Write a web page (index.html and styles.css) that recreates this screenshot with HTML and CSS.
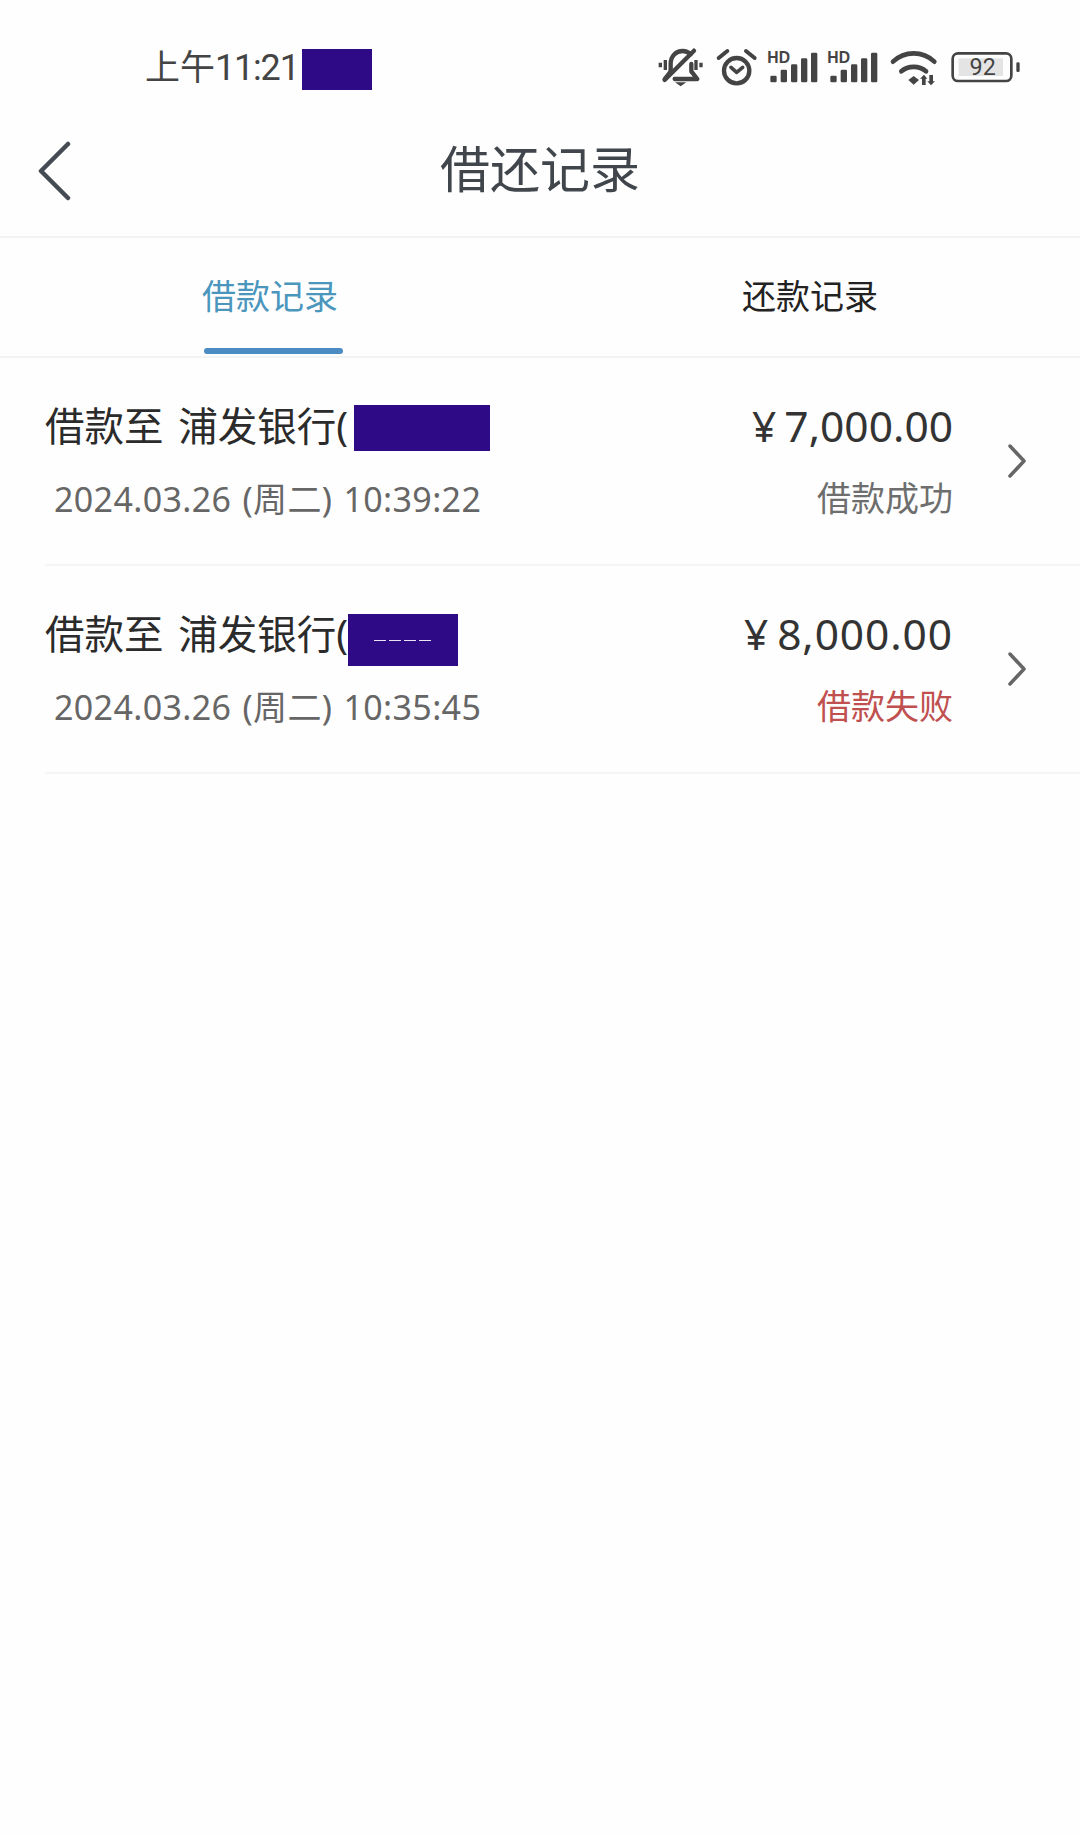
FILE: index.html
```html
<!DOCTYPE html>
<html lang="zh-CN">
<head>
  <meta charset="UTF-8">
  <meta name="viewport" content="width=device-width, initial-scale=1.0">
  <title>借还记录</title>
  <link rel="stylesheet" href="styles.css">
</head>
<body>
  <div class="status-bar">
    <span class="status-time">上午<span class="status-clock">11:21</span></span>
    <span class="mask mask-time"></span>
    <div class="status-icons">
      <svg class="icon-bell" viewBox="40 0 170 210">
        <g fill="none" stroke="#444" stroke-width="13" stroke-linecap="round" stroke-linejoin="round">
          <path d="M90 125 V102 C90 78 106 63 126 63 C136 63 144 67 150 73"/>
          <path d="M152 102 V124 L170 147 H102"/>
          <path d="M90 125 L72 147"/>
          <path d="M160 62 L72 150"/>
          <path d="M59 98 V112 M74 90 V120 M166 90 V120 M181 98 V112" stroke-width="10" stroke-linecap="butt"/>
        </g>
        <path d="M103 157 H137 L120 169 Z" fill="#444"/>
      </svg>
      <svg class="icon-alarm" viewBox="210 0 155 210">
        <g fill="none" stroke="#444" stroke-linecap="round" stroke-linejoin="round">
          <circle cx="290" cy="122" r="38" stroke-width="13"/>
          <path d="M236 84 L262 63 M318 63 L344 84" stroke-width="12"/>
          <path d="M273 112 L290 127 L308 112" stroke-width="11"/>
        </g>
      </svg>
      <svg class="icon-signal" viewBox="365 0 180 210">
        <text x="381" y="98" class="signal-hd">HD</text>
        <rect x="390" y="137" width="19" height="20" rx="4" fill="#444"/>
        <rect x="421" y="119" width="19" height="38" rx="4" fill="#444"/>
        <rect x="452" y="103" width="19" height="54" rx="4" fill="#444"/>
        <rect x="482" y="85" width="19" height="72" rx="4" fill="#444"/>
        <rect x="512" y="68" width="19" height="89" rx="4" fill="#444"/>
      </svg>
      <svg class="icon-signal" viewBox="365 0 185 210">
        <text x="381" y="98" class="signal-hd">HD</text>
        <rect x="390" y="137" width="19" height="20" rx="4" fill="#444"/>
        <rect x="421" y="119" width="19" height="38" rx="4" fill="#444"/>
        <rect x="452" y="103" width="19" height="54" rx="4" fill="#444"/>
        <rect x="482" y="85" width="19" height="72" rx="4" fill="#444"/>
        <rect x="512" y="68" width="19" height="89" rx="4" fill="#444"/>
      </svg>
      <svg class="icon-wifi" viewBox="730 0 190 210">
        <g fill="none" stroke="#444" stroke-linecap="round">
          <path d="M757 95 C792 62 846 62 881 95" stroke-width="14"/>
          <path d="M782 124 C802 106 836 106 856 124" stroke-width="14"/>
        </g>
        <path d="M803 150 L819 138 L835 150 L819 164 Z" fill="#444"/>
        <path d="M844 165 V146 H838 L850 134 L860 146 H855 V165 Z M866 135 V154 H860 L871 166 L883 154 H877 V135 Z" fill="#444"/>
      </svg>
      <svg class="icon-battery" viewBox="920 0 240 210">
        <rect x="937" y="70" width="176" height="83" rx="16" fill="none" stroke="#444" stroke-width="8"/>
        <rect x="955" y="85" width="133" height="53" fill="#e4e4e4"/>
        <text x="1027" y="136" class="battery-num" text-anchor="middle">92</text>
        <rect x="1128" y="97" width="10" height="29" rx="4" fill="#444"/>
      </svg>
    </div>
  </div>

  <div class="nav-bar">
    <svg class="back-icon" viewBox="0 0 34 60">
      <path d="M30 3 L3 30 L30 57" fill="none" stroke="#444b52" stroke-width="4.5" stroke-linecap="round" stroke-linejoin="round"/>
    </svg>
    <h1 class="nav-title">借还记录</h1>
  </div>

  <div class="tabs">
    <div class="tab tab-active">
      <span>借款记录</span>
      <i class="tab-line"></i>
    </div>
    <div class="tab">
      <span>还款记录</span>
    </div>
  </div>

  <div class="record-list">
    <div class="record">
      <div class="record-info">
        <div class="record-title">借款至 浦发银行(<span class="mask mask-bank-a"></span></div>
        <div class="record-date">2024.03.26 (周二) 10:39:22</div>
      </div>
      <div class="record-money">
        <div class="record-amount">¥<span>7,000.00</span></div>
        <div class="record-state">借款成功</div>
      </div>
      <svg class="arrow-icon" viewBox="0 0 18 34">
        <path d="M2 2 L16 17 L2 32" fill="none" stroke="#666" stroke-width="3.5" stroke-linecap="round" stroke-linejoin="round"/>
      </svg>
    </div>
    <div class="record">
      <div class="record-info">
        <div class="record-title">借款至 浦发银行(<span class="mask mask-bank-b"><i class="mask-dash"></i></span></div>
        <div class="record-date">2024.03.26 (周二) 10:35:45</div>
      </div>
      <div class="record-money">
        <div class="record-amount amount-wide">¥<span>8,000.00</span></div>
        <div class="record-state state-fail">借款失败</div>
      </div>
      <svg class="arrow-icon" viewBox="0 0 18 34">
        <path d="M2 2 L16 17 L2 32" fill="none" stroke="#666" stroke-width="3.5" stroke-linecap="round" stroke-linejoin="round"/>
      </svg>
    </div>
  </div>
</body>
</html>
```

FILE: styles.css
```css
* {
  box-sizing: border-box;
}

body {
  margin: 0;
  padding: 0;
  width: 1080px;
  height: 1836px;
  overflow: hidden;
  background-color: #fefefe;
  font-family: "Noto Sans", "Noto Sans CJK SC", sans-serif;
  color: #333;
}

.mask {
  display: inline-block;
  background-color: #2e0a86;
}

/* status bar */
.status-bar {
  display: flex;
  align-items: flex-start;
  height: 100px;
  padding-left: 145px;
}

.status-time {
  margin-top: 45px;
  font-size: 35px;
  line-height: 46px;
  color: #444;
  font-family: Roboto, "Noto Sans CJK SC", sans-serif;
}

.status-clock {
  font-size: 36px;
  letter-spacing: -1.2px;
}

.mask-time {
  width: 70px;
  height: 41px;
  margin-top: 49px;
  margin-left: 3px;
}

.status-icons {
  display: flex;
  margin-left: auto;
  margin-top: 30px;
  padding-right: 53px;
}

.status-icons svg {
  display: block;
  height: 70px;
}

.icon-bell { width: 56.67px; }
.icon-alarm { width: 51.67px; }
.icon-signal { width: 60px; }
.icon-signal + .icon-signal { width: 61.67px; }
.icon-wifi { width: 63.33px; }
.icon-battery { width: 80px; }

.signal-hd {
  font-family: "Liberation Sans", sans-serif;
  font-weight: bold;
  font-size: 47px;
  fill: #444;
}

.battery-num {
  font-family: Roboto, sans-serif;
  font-size: 70px;
  fill: #444;
}

/* title */
.nav-bar {
  display: flex;
  align-items: center;
  justify-content: center;
  position: relative;
  height: 138px;
  padding-top: 2px;
  border-bottom: 2px solid #f3f3f3;
}

.back-icon {
  position: absolute;
  left: 38px;
  top: 41px;
  width: 34px;
  height: 60px;
}

.nav-title {
  margin: 0;
  font-size: 50px;
  font-weight: 400;
  color: #40464c;
  line-height: 70px;
}

/* tabs */
.tabs {
  display: flex;
  height: 120px;
  border-bottom: 2px solid #f3f3f3;
}

.tab {
  flex: 1;
  display: flex;
  flex-direction: column;
  align-items: center;
  padding-top: 35px;
  font-size: 34px;
  line-height: 46px;
  color: #222;
}

.tab-active {
  color: #4a96bd;
}

.tab-line {
  display: block;
  width: 139px;
  height: 6px;
  margin-top: 29px;
  margin-left: 7px;
  border-radius: 3px;
  background-color: #4b8dc3;
}

/* records */
.record {
  display: flex;
  align-items: flex-start;
  height: 208px;
  margin-left: 45px;
  border-bottom: 2px solid #f5f5f5;
}

.record-info {
  flex: 1;
}

.record-title {
  display: flex;
  align-items: flex-start;
  height: 56px;
  margin-top: 40px;
  font-size: 39.5px;
  line-height: 56px;
  word-spacing: 4.5px;
  color: #2b2b2b;
  white-space: pre;
}

.mask-bank-a {
  width: 136px;
  height: 46px;
  margin-top: 7px;
  margin-left: 5.5px;
  flex: none;
}

.mask-bank-b {
  display: flex;
  align-items: center;
  justify-content: center;
  width: 110px;
  height: 52px;
  margin-top: 8px;
  flex: none;
}

.mask-dash {
  display: block;
  width: 58px;
  height: 1px;
  background: repeating-linear-gradient(to right, #e8e4f4 0, #e8e4f4 12px, transparent 12px, transparent 15px);
}

.record-date {
  margin-top: 22px;
  margin-left: 9px;
  font-size: 34px;
  line-height: 46px;
  letter-spacing: 0.35px;
  word-spacing: 2px;
  color: #666;
}

.record-money {
  text-align: right;
  padding-top: 40px;
}

.record-amount {
  font-size: 42.5px;
  line-height: 56px;
  color: #333;
}

.record-amount span {
  margin-left: 8px;
}

.amount-wide {
  letter-spacing: 0.9px;
}

.record-state {
  margin-top: 20px;
  font-size: 34px;
  line-height: 48px;
  color: #6e6e6e;
}

.state-fail {
  color: #c0504f;
}

.arrow-icon {
  width: 18px;
  height: 34px;
  margin-top: 86px;
  margin-left: 55px;
  margin-right: 54px;
}
```
